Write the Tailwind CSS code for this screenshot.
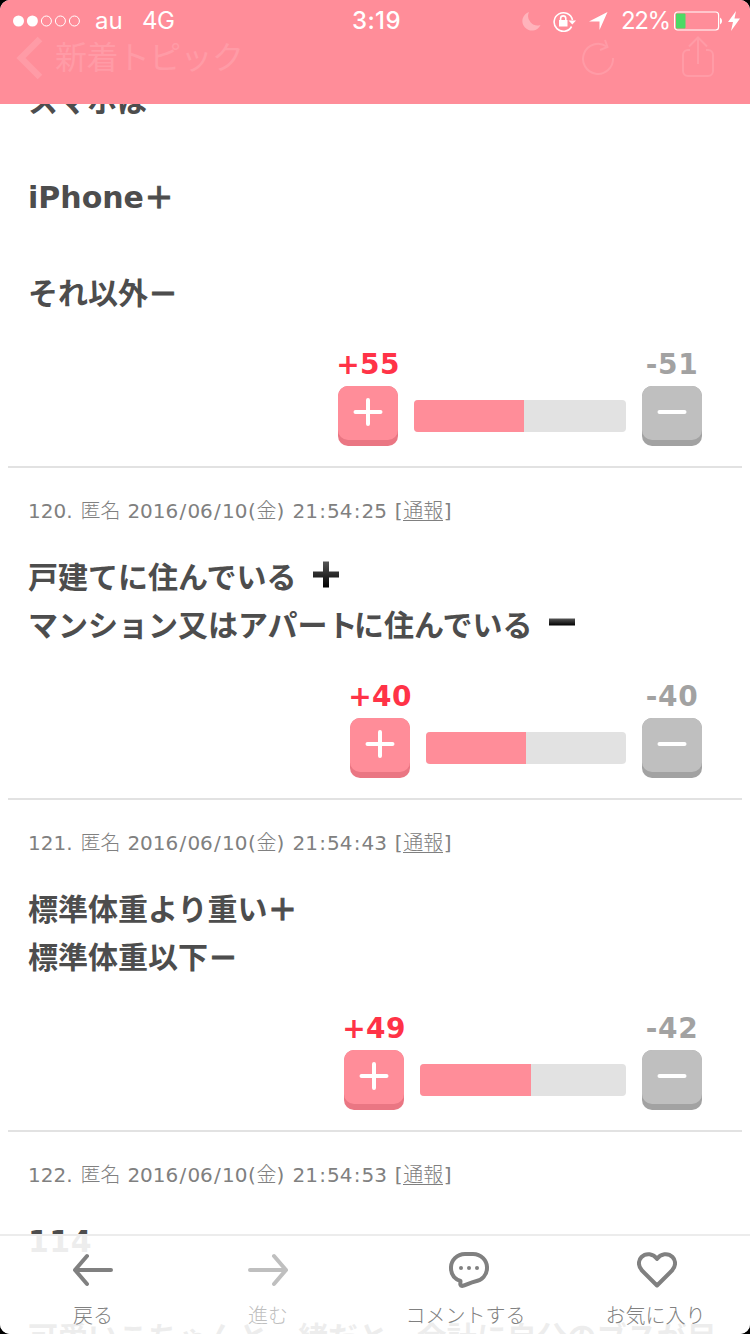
<!DOCTYPE html>
<html lang="ja">
<head>
<meta charset="utf-8">
<title>トピック</title>
<script src="https://cdn.jsdelivr.net/npm/@tailwindcss/browser@4"></script>
</head>
<body class="bg-black">
<div class="relative w-[750px] h-[1334px] overflow-hidden rounded-[10px] bg-white flex flex-col font-['DejaVu_Sans','Noto_Sans_CJK_JP',sans-serif] text-[#4d4d4d]">

  <header class="relative z-10 h-[104px] shrink-0 bg-[#ff8d99] text-white">
    <div class="h-10 grid grid-cols-[1fr_auto_1fr] items-center pl-[13px] pr-[10px] font-[Inter,sans-serif] text-[24px] leading-10 pt-px">
      <div class="flex items-center">
        <svg class="w-[68px] h-3" viewBox="0 0 68 12" fill="none" stroke="#fff"><circle cx="5.500" cy="6" r="5.500" fill="#fff" stroke="none"/><circle cx="19.400" cy="6" r="5.500" fill="#fff" stroke="none"/><circle cx="33.400" cy="6" r="5"/><circle cx="47.400" cy="6" r="5"/><circle cx="61.400" cy="6" r="5"/></svg>
        <span class="ml-[14px] w-[47px]">au</span><span class="tracking-[-0.5px]">4G</span>
      </div>
      <div class="font-medium tracking-[0.4px]">3:19</div>
      <div class="flex items-center justify-end">
        <svg class="w-[19px] h-5" viewBox="0 0 19 20"><path d="M7 1A9.500 9.500 0 1 0 18.500 14A9.500 9.500 0 0 1 7 1Z" fill="#ffb3bb"/></svg>
        <svg class="ml-3 w-6 h-[21px]" viewBox="0 0 24 21" fill="none" stroke="#fff" stroke-width="1.600"><path d="M18.600 15.500A9.300 9.300 0 1 1 19.500 9"/><path d="M15.500 9.500H23L19.300 13.500Z" fill="#fff" stroke="none"/><path d="M6 9h8.500v6.500H6z" fill="#fff" stroke="none"/><path d="M7.600 9.500V7.500a2.600 2.600 0 0 1 5.200 0v2"/></svg>
        <svg class="ml-3 w-[19px] h-5" viewBox="0 0 19 20"><path d="M18.500 1L10.500 19V10.500H0Z" fill="#fff"/></svg>
        <span class="ml-[13px] w-[53px] tracking-[-1.400px]">22%</span>
        <svg class="w-[49px] h-5" viewBox="0 0 49 20"><rect x=".600" y="1" width="44" height="18" rx="3" fill="none" stroke="#fff" stroke-width="1.200"/><rect x="2" y="2.500" width="9.500" height="15" rx="1" fill="#4cd964"/><path d="M46 6.500a4 4 0 0 1 0 7z" fill="#fff"/></svg>
        <svg class="ml-[5px] w-3 h-5" viewBox="0 0 12 20"><path d="M8 0L0 11H5L3 20L12 7.500H6.500Z" fill="#fff"/></svg>
      </div>
    </div>
    <div class="h-10 -mt-[2px] flex items-center text-[#ff9ba6] pl-[16px] pr-[35px]">
      <svg class="w-7 h-11" viewBox="0 0 28 44" fill="none" stroke="currentColor" stroke-width="6.500"><path d="M24 3L5 22L24 41"/></svg>
      <span class="ml-[11px] text-[32px] leading-10 tracking-[-0.600px]">新着トピック</span>
      <span class="flex-1"></span>
      <svg class="w-[34px] h-10" viewBox="0 0 34 40" fill="none" stroke="currentColor" stroke-width="2"><path d="M32 20A15 15 0 1 1 25.500 8.500"/><path d="M24 2l2.500 7-7.500 3"/></svg>
      <svg class="ml-[66px] -mt-[2px] w-[34px] h-[42px]" viewBox="0 0 34 42" fill="none" stroke="currentColor" stroke-width="2"><path d="M9 14H7a5 5 0 0 0-5 5v16a5 5 0 0 0 5 5h20a5 5 0 0 0 5-5V19a5 5 0 0 0-5-5h-2M17 28V2M8 10.500L17 1.500l9 9"/></svg>
    </div>
  </header>

  <main class="px-2 -mt-[26px]">
    <article class="h-[388px] pl-5 pr-10">
      <p class="h-[273px] text-[30px] leading-[48px] font-bold">スマホは<br><br>iPhone<span class="[-webkit-text-stroke:0.8px]">＋</span><br><br>それ以外<span class="[-webkit-text-stroke:0.8px]">－</span></p>
      <div class="flex justify-end gap-4">
        <div class="w-[60px] flex flex-col items-center"><b class="h-[35px] leading-7 text-[28px] tracking-[0.4px] text-[#ff3347]">+55</b><span class="w-[60px] h-[60px] rounded-[10px] bg-[#ea7683]"><span class="flex justify-center pt-[11px] h-[54px] rounded-[10px] bg-[#ff8d99]"><svg class="w-[30px] h-[30px]" viewBox="0 0 30 30" stroke="#fff" stroke-width="4" stroke-linecap="round"><path d="M2.500 15h25M15 3v24"/></svg></span></span></div>
        <div class="mt-[49px] w-[212px] h-8 rounded-[4px] overflow-hidden bg-[#e2e2e2]"><div class="h-8 bg-[#ff8d99]" style="width:110px"></div></div>
        <div class="w-[60px] flex flex-col items-center"><b class="h-[35px] leading-7 text-[28px] tracking-[0.7px] text-[#a2a2a2]">-51</b><span class="w-[60px] h-[60px] rounded-[10px] bg-[#a2a2a2]"><span class="flex justify-center pt-[11px] h-[54px] rounded-[10px] bg-[#bfbfbf]"><svg class="w-[30px] h-[30px]" viewBox="0 0 30 30" stroke="#fff" stroke-width="4" stroke-linecap="round"><path d="M2.500 15h25"/></svg></span></span></div>
      </div>
    </article>

    <article class="h-[332px] border-t-2 border-[#e2e2e2] pl-5 pr-10 pt-7">
      <div class="h-[58px] whitespace-pre text-[20px] leading-[30px] text-[#808080]"><span class="inline-block w-[52.400px]">120.</span><span class="inline-block w-[47px] font-light">匿名</span>2016<span class="inline-block w-[9.080px] text-center">/</span>06<span class="inline-block w-[9.080px] text-center">/</span>10<span class="inline-block w-[9.080px] text-center">(</span><span class="font-light">金</span><span class="inline-block w-[16.100px]">)</span>21<span class="inline-block w-[9.080px] text-center">:</span>54<span class="inline-block w-[9.080px] text-center">:</span><span class="inline-block w-[32.500px]">25</span><span class="inline-block w-[9.080px] text-center">[</span><span class="font-light border-b border-[#808080] inline-block h-[25px] leading-[30px] align-top">通報</span><span class="inline-block w-[9.080px] text-center">]</span></div>
      <p class="h-[129px] text-[30px] leading-[48px] font-bold whitespace-nowrap">戸建てに住んでいる<svg class="inline-block align-[0px] ml-[15px] w-7 h-[27px]" viewBox="0 0 28 27"><defs><linearGradient id="g" x1="0" y1="0" x2="0" y2="1"><stop offset="0" stop-color="#555"/><stop offset="1" stop-color="#000"/></linearGradient></defs><path d="M11 .500h6v10h10v6H17v10h-6v-10H1v-6h10z" fill="url(#g)"/></svg><br>マンション又はアパー<span class="tracking-[-3.500px]">ト</span>に住んでいる<svg class="inline-block align-[10px] ml-[16px] w-7 h-[8px]" viewBox="0 0 28 8"><path d="M1 .500h26v7H1z" fill="url(#g)"/></svg></p>
      <div class="flex justify-end gap-4">
        <div class="w-[60px] flex flex-col items-center"><b class="h-[35px] leading-7 text-[28px] tracking-[0.4px] text-[#ff3347]">+40</b><span class="w-[60px] h-[60px] rounded-[10px] bg-[#ea7683]"><span class="flex justify-center pt-[11px] h-[54px] rounded-[10px] bg-[#ff8d99]"><svg class="w-[30px] h-[30px]" viewBox="0 0 30 30" stroke="#fff" stroke-width="4" stroke-linecap="round"><path d="M2.500 15h25M15 3v24"/></svg></span></span></div>
        <div class="mt-[49px] w-[200px] h-8 rounded-[4px] overflow-hidden bg-[#e2e2e2]"><div class="h-8 bg-[#ff8d99]" style="width:100px"></div></div>
        <div class="w-[60px] flex flex-col items-center"><b class="h-[35px] leading-7 text-[28px] tracking-[0.7px] text-[#a2a2a2]">-40</b><span class="w-[60px] h-[60px] rounded-[10px] bg-[#a2a2a2]"><span class="flex justify-center pt-[11px] h-[54px] rounded-[10px] bg-[#bfbfbf]"><svg class="w-[30px] h-[30px]" viewBox="0 0 30 30" stroke="#fff" stroke-width="4" stroke-linecap="round"><path d="M2.500 15h25"/></svg></span></span></div>
      </div>
    </article>

    <article class="h-[332px] border-t-2 border-[#e2e2e2] pl-5 pr-10 pt-7">
      <div class="h-[58px] whitespace-pre text-[20px] leading-[30px] text-[#808080]"><span class="inline-block w-[52.400px]">121.</span><span class="inline-block w-[47px] font-light">匿名</span>2016<span class="inline-block w-[9.080px] text-center">/</span>06<span class="inline-block w-[9.080px] text-center">/</span>10<span class="inline-block w-[9.080px] text-center">(</span><span class="font-light">金</span><span class="inline-block w-[16.100px]">)</span>21<span class="inline-block w-[9.080px] text-center">:</span>54<span class="inline-block w-[9.080px] text-center">:</span><span class="inline-block w-[32.500px]">43</span><span class="inline-block w-[9.080px] text-center">[</span><span class="font-light border-b border-[#808080] inline-block h-[25px] leading-[30px] align-top">通報</span><span class="inline-block w-[9.080px] text-center">]</span></div>
      <p class="h-[129px] text-[30px] leading-[48px] font-bold">標準体重より重い<span class="[-webkit-text-stroke:0.8px]">＋</span><br>標準体重以下<span class="[-webkit-text-stroke:0.8px]">－</span></p>
      <div class="flex justify-end gap-4">
        <div class="w-[60px] flex flex-col items-center"><b class="h-[35px] leading-7 text-[28px] tracking-[0.4px] text-[#ff3347]">+49</b><span class="w-[60px] h-[60px] rounded-[10px] bg-[#ea7683]"><span class="flex justify-center pt-[11px] h-[54px] rounded-[10px] bg-[#ff8d99]"><svg class="w-[30px] h-[30px]" viewBox="0 0 30 30" stroke="#fff" stroke-width="4" stroke-linecap="round"><path d="M2.500 15h25M15 3v24"/></svg></span></span></div>
        <div class="mt-[49px] w-[206px] h-8 rounded-[4px] overflow-hidden bg-[#e2e2e2]"><div class="h-8 bg-[#ff8d99]" style="width:111px"></div></div>
        <div class="w-[60px] flex flex-col items-center"><b class="h-[35px] leading-7 text-[28px] tracking-[0.7px] text-[#a2a2a2]">-42</b><span class="w-[60px] h-[60px] rounded-[10px] bg-[#a2a2a2]"><span class="flex justify-center pt-[11px] h-[54px] rounded-[10px] bg-[#bfbfbf]"><svg class="w-[30px] h-[30px]" viewBox="0 0 30 30" stroke="#fff" stroke-width="4" stroke-linecap="round"><path d="M2.500 15h25"/></svg></span></span></div>
      </div>
    </article>

    <article class="border-t-2 border-[#e2e2e2] pl-5 pt-7">
      <div class="h-[58px] whitespace-pre text-[20px] leading-[30px] text-[#808080]"><span class="inline-block w-[52.400px]">122.</span><span class="inline-block w-[47px] font-light">匿名</span>2016<span class="inline-block w-[9.080px] text-center">/</span>06<span class="inline-block w-[9.080px] text-center">/</span>10<span class="inline-block w-[9.080px] text-center">(</span><span class="font-light">金</span><span class="inline-block w-[16.100px]">)</span>21<span class="inline-block w-[9.080px] text-center">:</span>54<span class="inline-block w-[9.080px] text-center">:</span><span class="inline-block w-[32.500px]">53</span><span class="inline-block w-[9.080px] text-center">[</span><span class="font-light border-b border-[#808080] inline-block h-[25px] leading-[30px] align-top">通報</span><span class="inline-block w-[9.080px] text-center">]</span></div>
      <p class="text-[30px] leading-[48px] font-bold whitespace-nowrap"><span class="tracking-[0.500px]">114</span><br><br>可愛いこちゃんと一緒だと、会計に自分のブスが目</p>
    </article>
  </main>

  <nav class="absolute z-10 bottom-0 left-0 w-full h-[100px] border-t-2 border-[#ececec] bg-clip-padding bg-white/90 grid grid-cols-[186px_163px_233px_147px] text-center text-[20px] leading-[30px] font-light text-[#808080]">
    <div class="flex flex-col items-center pt-4"><svg class="w-10 h-9 mb-[13px]" viewBox="0 0 40 36" fill="none" stroke="currentColor" stroke-width="4" stroke-linecap="round" stroke-linejoin="round"><path d="M38 18H2M14 4L2 18l12 14"/></svg>戻る</div>
    <div class="flex flex-col items-center pt-4 text-[#bfbfbf]"><svg class="w-10 h-9 mb-[13px]" viewBox="0 0 40 36" fill="none" stroke="currentColor" stroke-width="4" stroke-linecap="round" stroke-linejoin="round"><path d="M2 18h36M26 4l12 14-12 14"/></svg><span class="ml-px">進む</span></div>
    <div class="flex flex-col items-center pt-4"><svg class="w-10 h-9 mb-[13px] ml-[7px]" viewBox="0 0 40 36" fill="none" stroke="currentColor" stroke-width="4" stroke-linecap="round" stroke-linejoin="round"><path d="M16 2h8a14 13.500 0 0 1 14 14c0 7-5 12.500-12 13.500C21 30.500 17 33.500 13 34c-2.500 0-1.500-3-1.500-5C5.500 27 2 22 2 16A14 13.500 0 0 1 16 2Z"/><g fill="currentColor" stroke="none"><circle cx="12" cy="16" r="2"/><circle cx="20" cy="16" r="2"/><circle cx="28" cy="16" r="2"/></g></svg>コメントする</div>
    <div class="flex flex-col items-center pt-4"><svg class="w-10 h-9 mb-[13px] ml-[2px]" viewBox="0 0 40 36" fill="none" stroke="currentColor" stroke-width="4" stroke-linejoin="round"><path d="M20 33.500L5 18.500C1 14.500 1 8.500 4.500 5 9 .500 16.500 1.500 20 7 23.500 1.500 31 .500 35.500 5c3.500 3.500 3.500 9.500-.5 13.500Z"/></svg>お気に入り</div>
  </nav>
</div>
</body>
</html>
